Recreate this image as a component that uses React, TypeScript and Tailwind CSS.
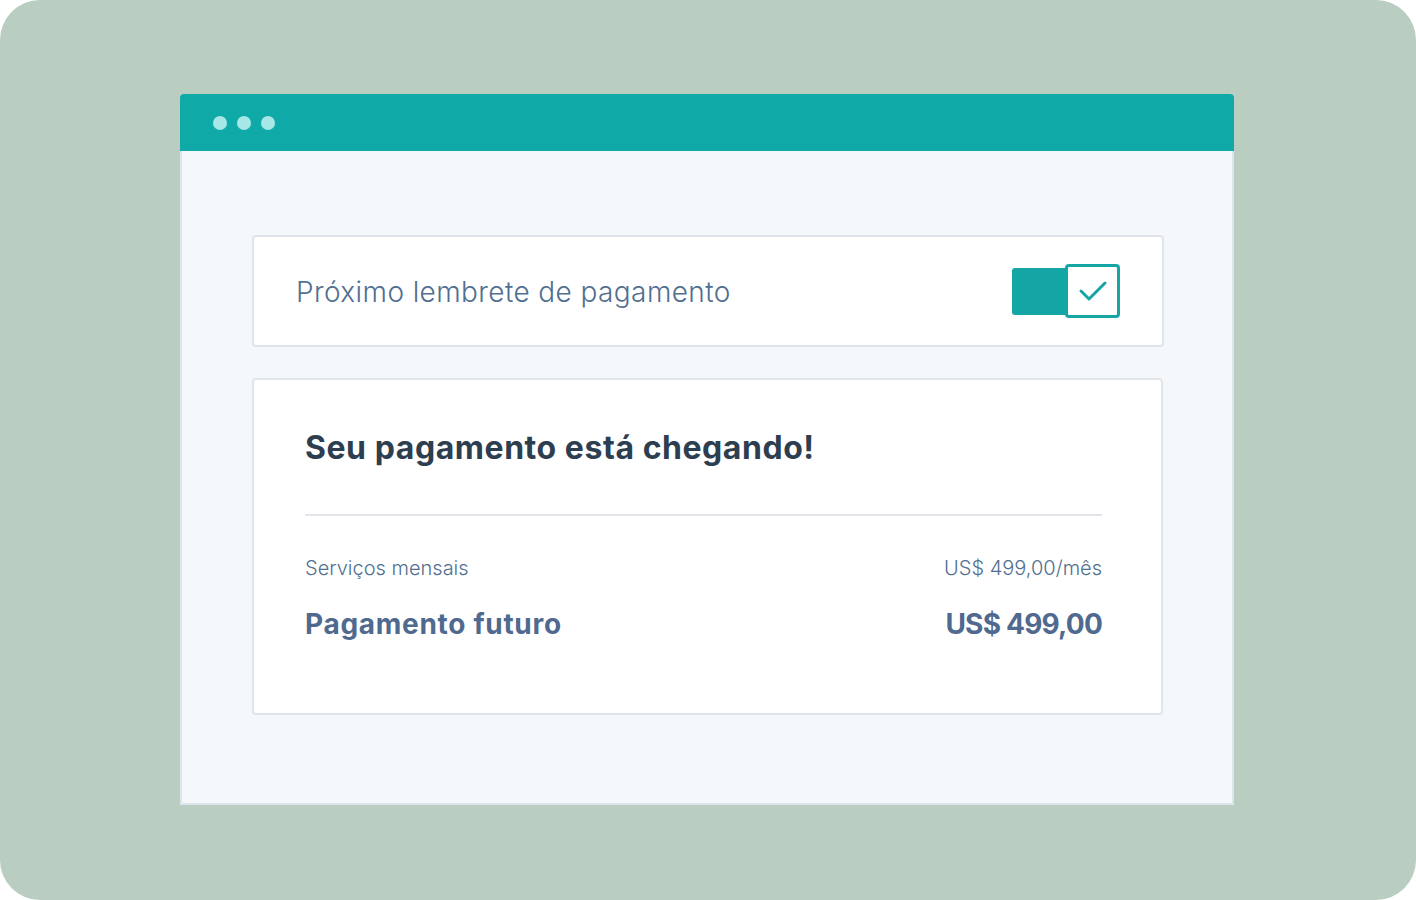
export default function App() {
    return (
        <div className="w-[1416px] h-[900px] bg-white">
            <div className="w-[1416px] h-[900px] rounded-[40px] bg-[#b9cec0] pt-[94px] pl-[180px]" style={{ fontFamily: "Inter, 'Open Sans', sans-serif" }}>
                <div className="w-[1054px]">
                    <div className="h-[57px] bg-[#0fa9a8] rounded-t-[4px] flex items-center gap-[10px] pl-[33px]">
                        <span className="w-[14px] h-[14px] rounded-full bg-[#a6e8e8]" />
                        <span className="w-[14px] h-[14px] rounded-full bg-[#a6e8e8]" />
                        <span className="w-[14px] h-[14px] rounded-full bg-[#a6e8e8]" />
                    </div>
                    <div className="h-[654px] bg-[#f5f8fb] border-2 border-t-0 border-[#dde5ea] pl-[70px] pt-[84px] flex flex-col gap-[31px]">
                        <div className="w-[912px] h-[112px] bg-white border-2 border-[#e0e5eb] rounded-[4px] flex items-center justify-between pl-[42px] pr-[42px]">
                            <span className="text-[28px] font-light text-[#516f90] tracking-[0.4px] mt-[1px]">Próximo lembrete de pagamento</span>
                            <div className="flex items-center">
                                <div className="w-[54px] h-[47px] bg-[#14a6a4] rounded-l-[3px]" />
                                <div className="w-[55px] h-[54px] border-[3px] border-[#14a6a4] rounded-[4px] bg-white flex items-center justify-center -ml-[1px]">
                                    <svg width="30" height="24" viewBox="0 0 30 24" fill="none" stroke="#14a6a4" strokeWidth="3" strokeLinecap="round" strokeLinejoin="round">
                                        <path d="M3 12l8 8L27 4" />
                                    </svg>
                                </div>
                            </div>
                        </div>
                        <div className="w-[911px] h-[337px] bg-white border-2 border-[#e0e5eb] rounded-[4px] pl-[51px] pr-[59px] pt-[48px]">
                            <h1 className="text-[32px] font-bold text-[#2d3e50] leading-[40px] tracking-[0.55px]">Seu pagamento está chegando!</h1>
                            <div className="mt-[46px] h-[2px] bg-[#e1e5ea]" />
                            <div className="mt-[38px] flex items-center justify-between text-[20px] font-light text-[#516f90] leading-[28px]">
                                <span>Serviços mensais</span>
                                <span>US$ 499,00/mês</span>
                            </div>
                            <div className="mt-[24px] flex items-center justify-between text-[28px] font-bold text-[#4f6a8e] leading-[36px]">
                                <span className="tracking-[0.7px]">Pagamento futuro</span>
                                <span className="tracking-[-0.8px]">US$ 499,00</span>
                            </div>
                        </div>
                    </div>
                </div>
            </div>
        </div>
    );
}
